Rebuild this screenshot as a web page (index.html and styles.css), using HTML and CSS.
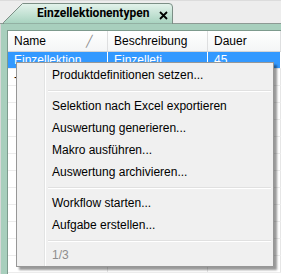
FILE: index.html
```html
<!DOCTYPE html>
<html>
<head>
<meta charset="utf-8">
<title>Einzellektionentypen</title>
<link rel="stylesheet" href="styles.css">
</head>
<body>

<div class="tabstrip">
  <div class="tab">
    <svg class="tab-shape" width="172" height="26" viewBox="0 0 172 26">
      <defs>
        <linearGradient id="tabfill" x1="0" y1="0" x2="0" y2="1">
          <stop offset="0" stop-color="#e4f3ec"/>
          <stop offset="1" stop-color="#a6d2be"/>
        </linearGradient>
      </defs>
      <path d="M0.5 26 L0.5 24.5 L19.5 5.5 L166 5.5 Q169.5 5.5 169.5 9 L169.5 26 Z" fill="url(#tabfill)" stroke="#7c8f86"/>
    </svg>
    <span class="tab-title">Einzellektionentypen</span>
    <svg class="tab-close" width="9" height="9" viewBox="0 0 9 9">
      <path d="M1 1 L8 8 M8 1 L1 8" stroke="#000000" stroke-width="1.8"/>
    </svg>
  </div>
</div>

<div class="frame">
  <div class="grid">
    <div class="row head">
      <div class="cell c1">Name <span class="sort">&#x2571;</span></div>
      <div class="cell c2">Beschreibung</div>
      <div class="cell c3">Dauer</div>
    </div>
    <div class="row sel">
      <div class="cell c1">Einzellektion</div>
      <div class="cell c2">Einzelleti</div>
      <div class="cell c3">45</div>
    </div>
    <div class="row"><div class="cell c1">-</div><div class="cell c2"></div><div class="cell c3"></div></div>
    <div class="row"><div class="cell c1"></div><div class="cell c2"></div><div class="cell c3"></div></div>
    <div class="row"><div class="cell c1"></div><div class="cell c2"></div><div class="cell c3"></div></div>
    <div class="row"><div class="cell c1"></div><div class="cell c2"></div><div class="cell c3"></div></div>
    <div class="row"><div class="cell c1"></div><div class="cell c2"></div><div class="cell c3"></div></div>
    <div class="row"><div class="cell c1"></div><div class="cell c2"></div><div class="cell c3"></div></div>
    <div class="row"><div class="cell c1"></div><div class="cell c2"></div><div class="cell c3"></div></div>
    <div class="row"><div class="cell c1"></div><div class="cell c2"></div><div class="cell c3"></div></div>
    <div class="row"><div class="cell c1"></div><div class="cell c2"></div><div class="cell c3"></div></div>
    <div class="row"><div class="cell c1"></div><div class="cell c2"></div><div class="cell c3"></div></div>
    <div class="row"><div class="cell c1"></div><div class="cell c2"></div><div class="cell c3"></div></div>
    <div class="row"><div class="cell c1"></div><div class="cell c2"></div><div class="cell c3"></div></div>
  </div>
</div>

<div class="menu">
  <div class="item">Produktdefinitionen setzen...</div>
  <div class="sep"></div>
  <div class="item">Selektion nach Excel exportieren</div>
  <div class="item">Auswertung generieren...</div>
  <div class="item">Makro ausführen...</div>
  <div class="item">Auswertung archivieren...</div>
  <div class="sep"></div>
  <div class="item">Workflow starten...</div>
  <div class="item">Aufgabe erstellen...</div>
  <div class="sep"></div>
  <div class="item off">1/3</div>
</div>

</body>
</html>
```

FILE: styles.css
```css
body{
  margin:0;
  width:281px;
  height:274px;
  overflow:hidden;
  position:relative;
  background:#f0f0f0;
  font-family:"Liberation Sans",Arial,sans-serif;
  font-size:12px;
  color:#000000;
}

.tabstrip{
  height:24px;
  padding-left:3px;
  border-top:1px solid #dcdcdc;
  border-bottom:1px solid #8d9a94;
  box-sizing:border-box;
  background:#ededed;
}

.tab{
  position:relative;
  width:172px;
  height:23px;
}

.tab-shape{
  position:absolute;
  left:0;
  top:-3px;
}

.tab-title{
  position:absolute;
  left:34px;
  top:5px;
  font-family:Roboto,"Liberation Sans",sans-serif;
  font-weight:bold;
  font-size:12px;
}

.tab-close{
  position:absolute;
  left:156px;
  top:10px;
}

.frame{
  height:250px;
  background:#a8cfbd;
  padding:6px 0 0 2px;
  border-left:1px solid #d8d8d8;
  box-sizing:border-box;
}

.grid{
  height:100%;
  background:#ffffff;
  border-left:1px solid #7d9a8d;
  border-top:1px solid #7d9a8d;
  margin-left:4px;
}

.row{
  display:flex;
  height:17px;
  border-bottom:1px solid #ececec;
  box-sizing:border-box;
}

.cell{
  box-sizing:border-box;
  padding-left:6px;
  line-height:16px;
  white-space:nowrap;
  overflow:hidden;
  border-right:1px solid #e6e6e6;
}

.c1{ width:100px; }
.c2{ width:100px; }
.c3{ flex:1; }

.row.head{
  height:21px;
  background:linear-gradient(#ffffff,#f4f5f6);
  border-bottom:1px solid #d5d5d5;
}

.row.head .cell{
  line-height:20px;
  border-right:1px solid #dedfe0;
  position:relative;
}

.sort{
  position:absolute;
  left:78px;
  top:0;
  color:#8a8a8a;
  font-size:11px;
}

.row.sel{
  background:#3399ff;
  color:#ffffff;
}

.row.sel .cell{
  border-right:1px solid #ffffff;
}

.menu{
  position:absolute;
  left:16px;
  top:62px;
  width:258px;
  height:205px;
  box-sizing:border-box;
  padding:2px;
  background:#f0f0f0;
  border:1px solid #979797;
  box-shadow:3px 3px 2px rgba(0,0,0,0.4);
  background-image:linear-gradient(to right,transparent 27px,#e2e3e3 27px,#e2e3e3 28px,#ffffff 28px,#ffffff 29px,transparent 29px);
}

.item{
  height:22px;
  line-height:21px;
  padding-left:33px;
}

.item.off{
  color:#8d8d8d;
  line-height:18px;
}

.sep{
  height:9px;
  margin-left:29px;
  background:linear-gradient(transparent 3px,#e0e0e0 3px,#e0e0e0 4px,#ffffff 4px,#ffffff 5px,transparent 5px);
}
```
